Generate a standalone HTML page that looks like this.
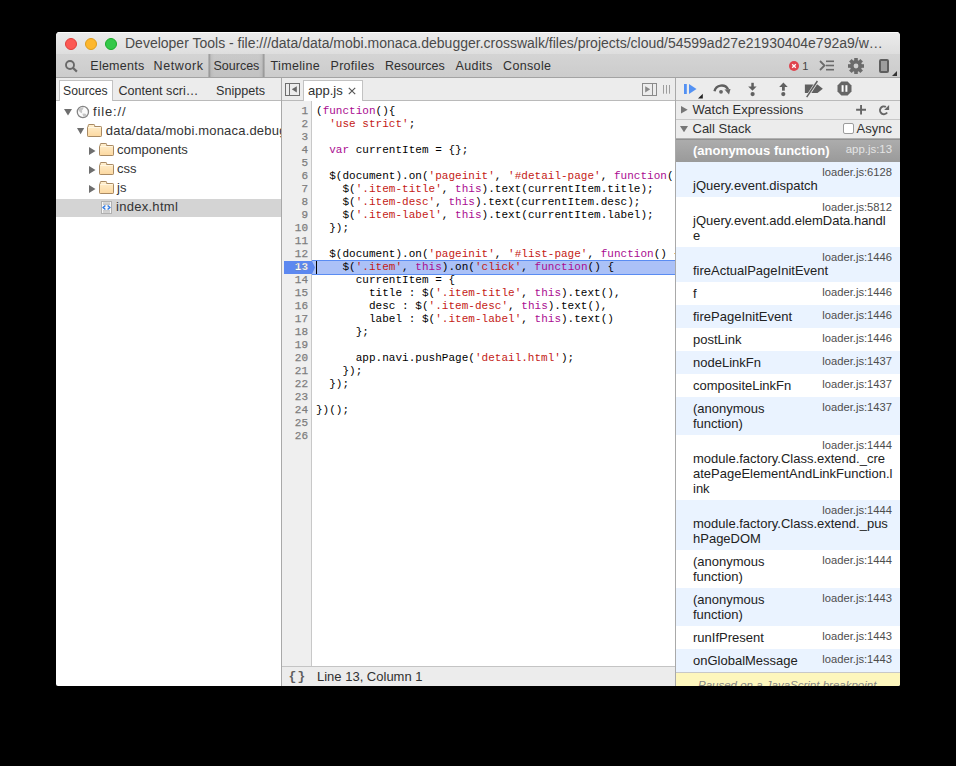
<!DOCTYPE html>
<html><head><meta charset="utf-8">
<style>
*{box-sizing:border-box;margin:0;padding:0}
html,body{width:956px;height:766px;background:#000;overflow:hidden}
body{position:relative;font-family:"Liberation Sans",sans-serif;color:#222}
.a{position:absolute;white-space:nowrap}
#win{position:absolute;left:56px;top:32px;width:844px;height:654px;background:#fff;border-radius:4px 4px 2px 2px;overflow:hidden}
#title{position:absolute;left:0;top:0;width:844px;height:22px;background:linear-gradient(#ececec,#dedede);box-shadow:inset 0 1px 0 #fbfbfb;}
.tl{position:absolute;top:6px;width:12px;height:12px;border-radius:50%}
#ttext{position:absolute;left:69px;top:3px;font-size:14px;line-height:16px;color:#4a4a4a;white-space:nowrap}
#tb{position:absolute;left:0;top:22px;width:844px;height:24px;background:linear-gradient(#d4d4d4,#cccccc);border-bottom:1px solid #a3a3a3}
.tbi{position:absolute;top:4.6px;font-size:12.5px;line-height:15px;color:#303030;white-space:nowrap}
#codewrap{position:absolute;left:256px;top:69px;width:363px;height:565px;overflow:hidden}
#code{position:absolute;left:4px;top:4px;font-family:"Liberation Mono",monospace;font-size:11px;letter-spacing:0.02px;line-height:13px;color:#000;white-space:pre}
#gut{position:absolute;left:226px;top:73px;width:26px;font-family:"Liberation Mono",monospace;font-size:11px;line-height:13px;color:#7d7d7d;-webkit-text-stroke:0.25px #7d7d7d;text-align:right;white-space:pre}
.k{color:#aa0d91}.s{color:#c41a16}
.fr{position:absolute;left:620px;width:224px}
.fr.b{background:#eaf3ff}
.ti{position:absolute;left:17px;font-size:13px;line-height:15px;color:#222;white-space:nowrap}
.st{position:absolute;right:8px;font-size:11.2px;line-height:13px;color:#4d4d4d;white-space:nowrap}
.tr{position:absolute;left:50px;font-size:13px;line-height:15px;color:#333;white-space:nowrap}
</style></head><body>
<div id="win">
  <div id="title">
    <div class="tl" style="left:9px;background:#fc5954;border:0.5px solid #df3f3a"></div>
    <div class="tl" style="left:29px;background:#fdb72e;border:0.5px solid #de9d1c"></div>
    <div class="tl" style="left:49px;background:#34c84a;border:0.5px solid #1aab29"></div>
    <div id="ttext">Developer Tools - file:///data/data/mobi.monaca.debugger.crosswalk/files/projects/cloud/54599ad27e21930404e792a9/w…</div>
  </div>
  <div id="tb">
    <svg class="a" style="left:8px;top:5px" width="16" height="14" viewBox="0 0 16 14"><circle cx="6" cy="6" r="4" fill="none" stroke="#696969" stroke-width="1.9"/><line x1="8.8" y1="8.8" x2="12.9" y2="12.6" stroke="#696969" stroke-width="2.2"/></svg>
    <div class="a" style="left:151.5px;top:0;width:57px;height:23px;background:linear-gradient(to right,rgba(0,0,0,0) 0,rgba(0,0,0,.3) 1px,rgba(0,0,0,.09) 3px,rgba(0,0,0,.05) 6px,rgba(0,0,0,.05) 51px,rgba(0,0,0,.09) 54px,rgba(0,0,0,.3) 56px,rgba(0,0,0,0) 57px)"></div>
    <div class="tbi" style="left:34.3px;letter-spacing:0.25px">Elements</div>
    <div class="tbi" style="left:97.5px;letter-spacing:0.6px">Network</div>
    <div class="tbi" style="left:157.5px">Sources</div>
    <div class="tbi" style="left:214.5px;letter-spacing:0.35px">Timeline</div>
    <div class="tbi" style="left:274.5px;letter-spacing:0.3px">Profiles</div>
    <div class="tbi" style="left:329px">Resources</div>
    <div class="tbi" style="left:399.5px;letter-spacing:0.4px">Audits</div>
    <div class="tbi" style="left:447.1px;letter-spacing:0.33px">Console</div>
    <!-- error badge -->
    <div class="a" style="left:733px;top:6.8px;width:10px;height:10px;border-radius:50%;background:#e0444e"></div>
    <svg class="a" style="left:733px;top:6.8px" width="10" height="10" viewBox="0 0 10 10"><path d="M3.2 3.2L6.8 6.8M6.8 3.2L3.2 6.8" stroke="#fff" stroke-width="1.3"/></svg>
    <div class="a" style="left:746.3px;top:4.6px;font-size:11px;line-height:15px;color:#444">1</div>
    <svg class="a" style="left:763px;top:6px" width="16" height="12" viewBox="0 0 16 12"><path d="M1 1L5.5 5.5L1 10" fill="none" stroke="#6b6b6b" stroke-width="1.8"/><rect x="7" y="0.5" width="8" height="1.6" fill="#6b6b6b"/><rect x="7" y="4.7" width="8" height="1.6" fill="#6b6b6b"/><rect x="7" y="8.9" width="8" height="1.6" fill="#6b6b6b"/></svg>
    <svg class="a" style="left:791px;top:3px" width="18" height="18" viewBox="0 0 18 18"><g transform="translate(9 9)" fill="#6b6b6b"><rect x="-1.8" y="-8" width="3.6" height="16"/><rect x="-1.8" y="-8" width="3.6" height="16" transform="rotate(45)"/><rect x="-1.8" y="-8" width="3.6" height="16" transform="rotate(90)"/><rect x="-1.8" y="-8" width="3.6" height="16" transform="rotate(135)"/><circle r="6"/><circle r="2.4" fill="#cfcfcf"/></g></svg>
    <div class="a" style="left:822.5px;top:5.3px;width:10.5px;height:13.5px;border:2px solid #5e5e5e;border-radius:2px;background:#9e9e9e"></div>
    <svg class="a" style="left:835px;top:16px" width="7" height="7" viewBox="0 0 7 7"><path d="M6 1V6H1Z" fill="#333"/></svg>
  </div>

  <!-- LEFT SIDEBAR -->
  <div class="a" style="left:0;top:46px;width:225px;height:23px;background:#ececec;border-bottom:1px solid #bababa"></div>
  <div class="a" style="left:2.5px;top:48.3px;width:54px;height:21px;background:#fff;border:1px solid #c2c2c2;border-bottom:none"></div>
  <div class="a" style="left:7px;top:51.8px;font-size:12.2px;line-height:15px;color:#303030">Sources</div>
  <div class="a" style="left:62.5px;top:51.8px;font-size:12.6px;line-height:15px;color:#303030">Content scri…</div>
  <div class="a" style="left:160px;top:51.8px;font-size:12.6px;line-height:15px;color:#303030">Snippets</div>
  <div class="a" style="left:225px;top:46px;width:1px;height:608px;background:#a9a9a9"></div>

  <!-- tree -->
  <div class="a" style="left:0;top:167px;width:225px;height:18px;background:#d4d4d4"></div>
  <svg class="a" style="left:8px;top:77px" width="8" height="7" viewBox="0 0 8 7"><path d="M0 0H8L4 6.5Z" fill="#6e6e6e"/></svg>
  <svg class="a" style="left:20px;top:73px" width="14" height="14" viewBox="0 0 14 14"><circle cx="6.9" cy="7" r="5.6" fill="#fbfbfb" stroke="#858585" stroke-width="1.3"/><path d="M3 4.2Q4.8 2 7.8 2.4L6.8 4.6Q5.2 5.4 6.3 7.1L5.6 8.2Q3.2 7.4 2.9 5.6Z" fill="#c6c6c6"/><path d="M6.2 8.8Q8.6 7.9 10.4 9.2Q10.4 11.2 8.6 12Q7 11.7 6.9 10.3Z" fill="#c6c6c6"/></svg>
  <div class="tr" style="left:37px;top:72.0px;letter-spacing:0.85px">file://</div>

  <svg class="a" style="left:20.6px;top:96px" width="8" height="7" viewBox="0 0 8 7"><path d="M0 0H7.2L3.6 6.3Z" fill="#6e6e6e"/></svg>
  <svg class="a" style="left:31px;top:92px" width="15" height="13" viewBox="0 0 15 13"><path d="M0.5 3.2Q0.5 2.5 1.2 2.5H1.3V1.2Q1.3 0.5 2 0.5H6.9Q7.6 0.5 7.6 1.2V2.5H13.8Q14.5 2.5 14.5 3.2V11.8Q14.5 12.5 13.8 12.5H1.2Q0.5 12.5 0.5 11.8Z" fill="url(#fg)" stroke="#a98a63" stroke-width="1"/><path d="M1.4 3.5H13.6" stroke="#fff7e4" stroke-width="0.9"/><defs><linearGradient id="fg" x1="0" y1="0" x2="0" y2="1"><stop offset="0" stop-color="#fff0d0"/><stop offset="1" stop-color="#fcd8a0"/></linearGradient></defs></svg>
  <div class="a" style="left:0;top:85px;width:225px;height:24px;overflow:hidden"><div class="tr" style="left:49.8px;top:6.0px;letter-spacing:0.19px">data/data/mobi.monaca.debugger.crosswalk</div></div>

  <svg class="a" style="left:33px;top:114.5px" width="7" height="8" viewBox="0 0 7 8"><path d="M0 0V8L6.5 4Z" fill="#6e6e6e"/></svg>
  <svg class="a" style="left:43px;top:111px" width="15" height="13" viewBox="0 0 15 13"><path d="M0.5 3.2Q0.5 2.5 1.2 2.5H1.3V1.2Q1.3 0.5 2 0.5H6.9Q7.6 0.5 7.6 1.2V2.5H13.8Q14.5 2.5 14.5 3.2V11.8Q14.5 12.5 13.8 12.5H1.2Q0.5 12.5 0.5 11.8Z" fill="url(#fg)" stroke="#a98a63" stroke-width="1"/><path d="M1.4 3.5H13.6" stroke="#fff7e4" stroke-width="0.9"/></svg>
  <div class="tr" style="left:61px;top:110.0px">components</div>

  <svg class="a" style="left:33px;top:133.5px" width="7" height="8" viewBox="0 0 7 8"><path d="M0 0V8L6.5 4Z" fill="#6e6e6e"/></svg>
  <svg class="a" style="left:43px;top:130px" width="15" height="13" viewBox="0 0 15 13"><path d="M0.5 3.2Q0.5 2.5 1.2 2.5H1.3V1.2Q1.3 0.5 2 0.5H6.9Q7.6 0.5 7.6 1.2V2.5H13.8Q14.5 2.5 14.5 3.2V11.8Q14.5 12.5 13.8 12.5H1.2Q0.5 12.5 0.5 11.8Z" fill="url(#fg)" stroke="#a98a63" stroke-width="1"/><path d="M1.4 3.5H13.6" stroke="#fff7e4" stroke-width="0.9"/></svg>
  <div class="tr" style="left:61px;top:129.0px">css</div>

  <svg class="a" style="left:33px;top:152.5px" width="7" height="8" viewBox="0 0 7 8"><path d="M0 0V8L6.5 4Z" fill="#6e6e6e"/></svg>
  <svg class="a" style="left:43px;top:149px" width="15" height="13" viewBox="0 0 15 13"><path d="M0.5 3.2Q0.5 2.5 1.2 2.5H1.3V1.2Q1.3 0.5 2 0.5H6.9Q7.6 0.5 7.6 1.2V2.5H13.8Q14.5 2.5 14.5 3.2V11.8Q14.5 12.5 13.8 12.5H1.2Q0.5 12.5 0.5 11.8Z" fill="url(#fg)" stroke="#a98a63" stroke-width="1"/><path d="M1.4 3.5H13.6" stroke="#fff7e4" stroke-width="0.9"/></svg>
  <div class="tr" style="left:61px;top:148.0px">js</div>

  <svg class="a" style="left:44.5px;top:168.5px" width="11" height="13" viewBox="0 0 11 13"><rect x="0.5" y="0.5" width="10" height="12" fill="#f6f6f6" stroke="#b0b0b0"/><path d="M2 2H9M2 3.3H9M2 9.8H9M2 11.1H9" stroke="#a9a9a9" stroke-width="0.8"/><path d="M4.4 4.5L2.1 6.5L4.4 8.5M6.6 4.5L8.9 6.5L6.6 8.5" fill="none" stroke="#2f7ae5" stroke-width="1.4"/></svg>
  <div class="tr" style="left:60px;top:167.0px;letter-spacing:0.28px">index.html</div>

  <!-- EDITOR -->
  <div class="a" style="left:226px;top:46px;width:393px;height:23px;background:#ececec;border-bottom:1px solid #bababa"></div>
  <svg class="a" style="left:229px;top:51px" width="15" height="13" viewBox="0 0 15 13"><rect x="0.5" y="0.5" width="14" height="12" fill="none" stroke="#6e6e6e"/><line x1="4.5" y1="0.5" x2="4.5" y2="12.5" stroke="#6e6e6e"/><path d="M11.8 3.2V9.4L6.8 6.3Z" fill="#666"/></svg>
  <div class="a" style="left:247px;top:48.4px;width:59.5px;height:21px;background:#fff;border:1px solid #c2c2c2;border-bottom:none"></div>
  <div class="a" style="left:252px;top:50.9px;font-size:13px;line-height:15px;color:#303030">app.js</div>
  <svg class="a" style="left:292px;top:55px" width="8" height="8" viewBox="0 0 8 8"><path d="M0.8 0.8L7.2 7.2M7.2 0.8L0.8 7.2" stroke="#555" stroke-width="1.15"/></svg>
  <svg class="a" style="left:586px;top:51px" width="15" height="13" viewBox="0 0 15 13"><rect x="0.5" y="0.5" width="14" height="12" fill="none" stroke="#8a8a8a"/><line x1="10.5" y1="0.5" x2="10.5" y2="12.5" stroke="#8a8a8a"/><path d="M3.2 3.2V9.4L8.2 6.3Z" fill="#888"/></svg>
  <svg class="a" style="left:607px;top:53px" width="8" height="9" viewBox="0 0 8 9"><path d="M0.5 0V8.7M3.5 0V8.7M6.5 0V8.7" stroke="#9d9d9d" stroke-width="1"/></svg>

  <div class="a" style="left:226px;top:69px;width:30px;height:565px;background:#efefef;border-right:1px solid #c8c8c8"></div>
  <!-- line 13 highlight -->
  <div class="a" style="left:256px;top:228px;width:363px;height:15px;background:#abc1f7;border-top:1px solid #5a8cf2;border-bottom:1px solid #5a8cf2"></div>
  <svg class="a" style="left:228px;top:229px" width="32" height="13" viewBox="0 0 32 13"><path d="M0 0H28L31 6.5L28 13H0Z" fill="#5c88f0"/></svg>
  <div class="a" style="left:260px;top:229px;width:1px;height:13px;background:#000"></div>
  <div class="a" style="left:226px;top:634px;width:393px;height:20px;background:#ececec;border-top:1px solid #c4c4c4"></div>
  <div class="a" style="left:232.4px;top:636.5px;font-family:'Liberation Mono',monospace;font-weight:bold;font-size:13px;line-height:15px;color:#5e5e5e;letter-spacing:1.4px">{}</div>
  <div class="a" style="left:261px;top:637px;font-size:13px;line-height:15px;color:#303030">Line 13, Column 1</div>
  <div class="a" style="left:619px;top:46px;width:1px;height:608px;background:#a9a9a9"></div>
  <div id="gut">1
2
3
4
5
6
7
8
9
10
11
12
<b style="color:#fff">13</b>
14
15
16
17
18
19
20
21
22
23
24
25
26</div>
  <div id="codewrap"><div id="code">(<span class="k">function</span>(){
  <span class="s">'use strict'</span>;

  <span class="k">var</span> currentItem = {};

  $(document).on(<span class="s">'pageinit'</span>, <span class="s">'#detail-page'</span>, <span class="k">function</span>() {
    $(<span class="s">'.item-title'</span>, <span class="k">this</span>).text(currentItem.title);
    $(<span class="s">'.item-desc'</span>, <span class="k">this</span>).text(currentItem.desc);
    $(<span class="s">'.item-label'</span>, <span class="k">this</span>).text(currentItem.label);
  });

  $(document).on(<span class="s">'pageinit'</span>, <span class="s">'#list-page'</span>, <span class="k">function</span>() {
    $(<span class="s">'.item'</span>, <span class="k">this</span>).on(<span class="s">'click'</span>, <span class="k">function</span>() {
      currentItem = {
        title : $(<span class="s">'.item-title'</span>, <span class="k">this</span>).text(),
        desc : $(<span class="s">'.item-desc'</span>, <span class="k">this</span>).text(),
        label : $(<span class="s">'.item-label'</span>, <span class="k">this</span>).text()
      };

      app.navi.pushPage(<span class="s">'detail.html'</span>);
    });
  });

})();
</div></div>

  <!-- RIGHT SIDEBAR -->
  <div class="a" style="left:620px;top:46px;width:224px;height:23px;background:#ececec;border-bottom:1px solid #bababa"></div>
  <!-- debugger toolbar -->
  <svg class="a" style="left:627px;top:51px" width="21" height="17" viewBox="0 0 21 17"><rect x="1" y="1" width="2.8" height="10" fill="#5391f3"/><path d="M6 1L13.5 6L6 11Z" fill="#5391f3"/><path d="M19.8 10.8V15.6H15Z" fill="#222"/></svg>
  <svg class="a" style="left:656px;top:51px" width="20" height="12" viewBox="0 0 20 12"><path d="M2.5 8.2C4 1.6 13 0.5 16 6.2" fill="none" stroke="#5f5f5f" stroke-width="2.4"/><path d="M12.5 6.5L18.5 6L17 11.5Z" fill="#666"/><circle cx="9" cy="8.8" r="1.9" fill="#666"/></svg>
  <svg class="a" style="left:690px;top:49px" width="12" height="16" viewBox="0 0 12 16"><rect x="5.3" y="1.8" width="2.5" height="4.2" fill="#606060"/><path d="M2.2 5.6H10.6L6.5 9.8Z" fill="#606060"/><circle cx="6.6" cy="13.1" r="2.1" fill="#606060"/></svg>
  <svg class="a" style="left:721px;top:49px" width="12" height="16" viewBox="0 0 12 16"><path d="M2.2 5.9H10.7L6.4 1.6Z" fill="#606060"/><rect x="5" y="5.6" width="2.8" height="4.1" fill="#606060"/><circle cx="6.3" cy="13.1" r="2.1" fill="#606060"/></svg>
  <svg class="a" style="left:747px;top:48px" width="22" height="19" viewBox="0 0 22 19"><path d="M1.9 4.6H14.5L19.8 8.75L14.5 12.9H1.9Z" fill="#606060"/><line x1="14.6" y1="0.8" x2="3.9" y2="17.3" stroke="#ececec" stroke-width="3"/><line x1="14.4" y1="1" x2="3.7" y2="17.1" stroke="#606060" stroke-width="1.5"/></svg>
  <svg class="a" style="left:781.2px;top:49px" width="15" height="15" viewBox="0 0 15 15"><path d="M4.4 0.5H10.6L14.5 4.4V10.6L10.6 14.5H4.4L0.5 10.6V4.4Z" fill="#666"/><rect x="4.6" y="4.2" width="2" height="6.6" fill="#fff"/><rect x="8.4" y="4.2" width="2" height="6.6" fill="#fff"/></svg>

  <!-- watch expressions -->
  <div class="a" style="left:620px;top:69px;width:224px;height:19px;background:#ececec;border-bottom:1px solid #c8c8c8"></div>
  <svg class="a" style="left:625px;top:74.4px" width="7" height="8" viewBox="0 0 7 8"><path d="M0 0V7.5L6.7 3.75Z" fill="#777"/></svg>
  <div class="a" style="left:636.5px;top:69.8px;font-size:13px;line-height:15px;color:#303030">Watch Expressions</div>
  <svg class="a" style="left:799px;top:72px" width="12" height="12" viewBox="0 0 12 12"><path d="M6.05 0.9V10.5M1.1 5.8H11" stroke="#666" stroke-width="1.9"/></svg>
  <svg class="a" style="left:822px;top:72px" width="12" height="12" viewBox="0 0 12 12"><path d="M7.85 2.92A3.9 3.9 0 1 0 9.1 8.54" fill="none" stroke="#666" stroke-width="2"/><path d="M11.1 0.9V6.1H6.2Z" fill="#666"/></svg>
  <!-- call stack header -->
  <div class="a" style="left:620px;top:88px;width:224px;height:19px;background:#ececec;border-bottom:1px solid #b0b0b0"></div>
  <svg class="a" style="left:624.2px;top:94px" width="8" height="7" viewBox="0 0 8 7"><path d="M0 0H8L4 6.3Z" fill="#777"/></svg>
  <div class="a" style="left:636.5px;top:88.7px;font-size:13px;line-height:15px;color:#303030">Call Stack</div>
  <div class="a" style="left:786.5px;top:91px;width:11px;height:11px;background:#fff;border:1px solid #9c9c9c;border-radius:2px"></div>
  <div class="a" style="left:800.5px;top:88.7px;font-size:13px;line-height:15px;color:#303030">Async</div>

  <!-- frames -->
  <div class="a" style="left:620px;top:107px;width:224px;height:23px;background:linear-gradient(#acacac,#9a9a9a);border-top:1px solid #909090"></div>
  <div class="a" style="left:637px;top:111px;font-size:13px;font-weight:bold;line-height:15px;color:#fff">(anonymous function)</div>
  <div class="a" style="right:8px;top:111px;font-size:11.4px;line-height:13px;color:#e4e4e4;text-align:right">app.js:13</div>

  <div id="frames">
<div class="fr b" style="top:130px;height:35px">
<div class="st" style="top:4.1px">loader.js:6128</div>
<div class="ti" style="top:16.0px">jQuery.event.dispatch</div>
</div>
<div class="fr" style="top:165px;height:50px">
<div class="st" style="top:4.1px">loader.js:5812</div>
<div class="ti" style="top:16.0px">jQuery.event.add.elemData.handl</div>
<div class="ti" style="top:30.8px">e</div>
</div>
<div class="fr b" style="top:215px;height:35px">
<div class="st" style="top:4.1px">loader.js:1446</div>
<div class="ti" style="top:16.0px">fireActualPageInitEvent</div>
</div>
<div class="fr" style="top:250px;height:23px">
<div class="st" style="top:4.1px">loader.js:1446</div>
<div class="ti" style="top:4.2px">f</div>
</div>
<div class="fr b" style="top:273px;height:23px">
<div class="st" style="top:4.1px">loader.js:1446</div>
<div class="ti" style="top:4.2px">firePageInitEvent</div>
</div>
<div class="fr" style="top:296px;height:23px">
<div class="st" style="top:4.1px">loader.js:1446</div>
<div class="ti" style="top:4.2px">postLink</div>
</div>
<div class="fr b" style="top:319px;height:23px">
<div class="st" style="top:4.1px">loader.js:1437</div>
<div class="ti" style="top:4.2px">nodeLinkFn</div>
</div>
<div class="fr" style="top:342px;height:23px">
<div class="st" style="top:4.1px">loader.js:1437</div>
<div class="ti" style="top:4.2px">compositeLinkFn</div>
</div>
<div class="fr b" style="top:365px;height:38px">
<div class="st" style="top:4.1px">loader.js:1437</div>
<div class="ti" style="top:4.2px">(anonymous</div>
<div class="ti" style="top:18.8px">function)</div>
</div>
<div class="fr" style="top:403px;height:65px">
<div class="st" style="top:4.1px">loader.js:1444</div>
<div class="ti" style="top:16.0px">module.factory.Class.extend._cre</div>
<div class="ti" style="top:30.8px">atePageElementAndLinkFunction.l</div>
<div class="ti" style="top:45.6px">ink</div>
</div>
<div class="fr b" style="top:468px;height:50px">
<div class="st" style="top:4.1px">loader.js:1444</div>
<div class="ti" style="top:16.0px">module.factory.Class.extend._pus</div>
<div class="ti" style="top:30.8px">hPageDOM</div>
</div>
<div class="fr" style="top:518px;height:38px">
<div class="st" style="top:4.1px">loader.js:1444</div>
<div class="ti" style="top:4.2px">(anonymous</div>
<div class="ti" style="top:18.8px">function)</div>
</div>
<div class="fr b" style="top:556px;height:38px">
<div class="st" style="top:4.1px">loader.js:1443</div>
<div class="ti" style="top:4.2px">(anonymous</div>
<div class="ti" style="top:18.8px">function)</div>
</div>
<div class="fr" style="top:594px;height:23px">
<div class="st" style="top:4.1px">loader.js:1443</div>
<div class="ti" style="top:4.2px">runIfPresent</div>
</div>
<div class="fr b" style="top:617px;height:23px">
<div class="st" style="top:4.1px">loader.js:1443</div>
<div class="ti" style="top:4.2px">onGlobalMessage</div>
</div>
</div>
  <div class="a" style="left:620px;top:640px;width:224px;height:14px;background:#fdf6bd;border-top:1px solid #c8c8c8"></div>
  <div class="a" style="left:642px;top:646.3px;font-size:11.5px;font-style:italic;line-height:15px;color:#858585">Paused on a JavaScript breakpoint.</div>
</div>

</body></html>
